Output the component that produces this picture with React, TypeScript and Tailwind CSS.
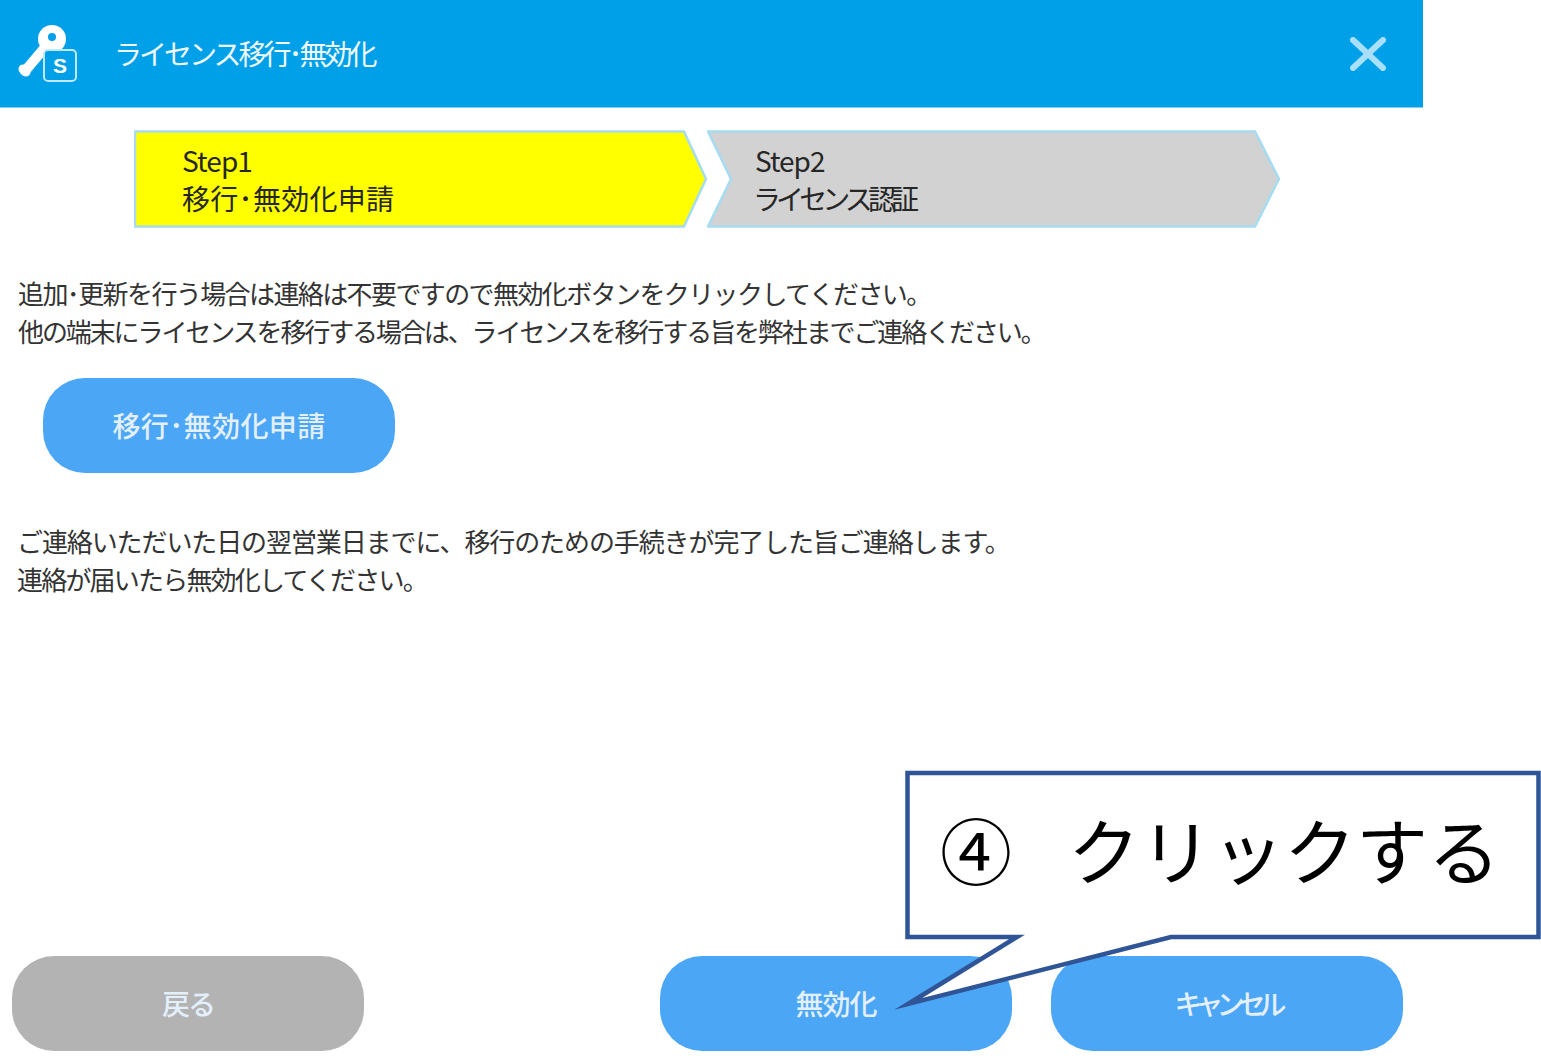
const jpFont = "font-['Noto_Sans_CJK_JP','Noto_Sans',sans-serif]";

function KeyIcon() {
  return (
    <svg width="64" height="64" viewBox="0 0 64 64" className="shrink-0 mt-[7px]">
      <path d="M30 20 L8 46" stroke="#fff" strokeWidth="10" strokeLinecap="round" fill="none" />
      <path d="M9 47 L6 44" stroke="#fff" strokeWidth="9" strokeLinecap="round" fill="none" />
      <circle cx="35" cy="14" r="14" fill="#fff" />
      <circle cx="35" cy="12" r="4" fill="#00a0e9" />
      <rect x="27" y="25" width="32" height="31" rx="4" fill="#00a0e9" stroke="#bfe8fb" strokeWidth="2" />
      <text x="43" y="48" textAnchor="middle" fontSize="21" fontWeight="700" fill="#fff" fontFamily="Liberation Sans, sans-serif">S</text>
    </svg>
  );
}

function CloseIcon() {
  return (
    <svg width="36" height="34" viewBox="0 0 36 34">
      <path d="M3 3 L33 31 M33 3 L3 31" stroke="#a8e0fb" strokeWidth="6" strokeLinecap="round" />
    </svg>
  );
}

interface StepProps {
  title: string;
  label: string;
  active?: boolean;
}

function Step({ title, label, active }: StepProps) {
  return (
    <div className="relative w-[573px] h-[98px]">
      <svg width="575" height="98" viewBox="0 0 575 98" className="absolute inset-0">
        {active ? (
          <polygon points="1,1.5 550,1.5 572,49 550,96.5 1,96.5" fill="#ffff00" stroke="#a6dcf2" strokeWidth="2.5" />
        ) : (
          <polygon points="1,1.5 548,1.5 572,49 548,96.5 1,96.5 24,49" fill="#d2d2d2" stroke="#a6dcf2" strokeWidth="2.5" />
        )}
      </svg>
      <div className="relative pl-[48px] pt-[11px] text-[28px] leading-[38px] text-[#262626]">
        <div className={active ? 'tracking-[-0.9px]' : 'tracking-[-1px]'}>{title}</div>
        <div className={active ? 'tracking-[0.3px]' : 'tracking-[-4.9px] -ml-[2px]'}>{label}</div>
      </div>
    </div>
  );
}

function ActionButton({ label, gray, trackingClass }: { label: string; gray?: boolean; trackingClass: string }) {
  return (
    <button
      className={`w-[352px] h-[95px] pb-[2px] rounded-[42px] text-[28px] font-medium text-[#e3f0fc] flex items-center justify-center ${trackingClass} ${
        gray ? 'bg-[#b3b3b3]' : 'bg-[#4ba6f5]'
      }`}
    >
      {label}
    </button>
  );
}

function Callout() {
  return (
    <div className="absolute left-[880px] top-[770px] w-[661px] h-[245px]">
      <svg width="661" height="245" viewBox="0 0 661 245" className="absolute inset-0">
        <polygon
          points="27.5,3 658.5,3 658.5,167 291,167 28,234 137,167 27.5,167"
          fill="#fff"
          stroke="#2f5597"
          strokeWidth="4.5"
          strokeMiterlimit="20"
        />
      </svg>
      <div className="relative flex items-center pl-[60px] pt-[33px] text-[72px] leading-[90px] text-black">
        <span>④</span>
        <span className="ml-[56px]">クリックする</span>
      </div>
    </div>
  );
}

export default function App() {
  return (
    <div className={`relative w-[1541px] h-[1063px] bg-white overflow-hidden ${jpFont}`}>
      <div className="w-[1423px] h-full flex flex-col">
        <header className="h-[108px] shrink-0 bg-[#00a0e9] border-b border-[#7fd0f4] flex items-center pl-[17px] pr-[37px]">
          <KeyIcon />
          <h1 className="ml-[33px] mb-[2px] text-[28px] tracking-[-3px] text-[#f0f9fe] font-normal">ライセンス移行･無効化</h1>
          <div className="ml-auto">
            <CloseIcon />
          </div>
        </header>

        <div className="flex pl-[134px] pt-[22px]">
          <Step title="Step1" label="移行･無効化申請" active />
          <Step title="Step2" label="ライセンス認証" />
        </div>

        <div className="pl-[18px] pt-[46px] text-[26px] leading-[38px] text-[#333333] whitespace-nowrap">
          <p className="tracking-[-1.6px]">追加･更新を行う場合は連絡は不要ですので無効化ボタンをクリックしてください。</p>
          <p className="tracking-[-2.1px]">他の端末にライセンスを移行する場合は、ライセンスを移行する旨を弊社までご連絡ください。</p>
        </div>

        <div className="pl-[43px] pt-[28px]">
          <ActionButton label="移行･無効化申請" trackingClass="tracking-[0.4px]" />
        </div>

        <div className="pl-[17px] pt-[49px] text-[26px] leading-[38px] text-[#333333] whitespace-nowrap">
          <p className="tracking-[-1.1px]">ご連絡いただいた日の翌営業日までに、移行のための手続きが完了した旨ご連絡します。</p>
          <p className="tracking-[-1.8px]">連絡が届いたら無効化してください。</p>
        </div>

        <footer className="mt-auto pb-[12px] pl-[12px] pr-[20px] flex items-center">
          <ActionButton label="戻る" gray trackingClass="tracking-[-2px]" />
          <div className="ml-auto flex gap-[39px]">
            <ActionButton label="無効化" trackingClass="tracking-[-1px]" />
            <ActionButton label="キャンセル" trackingClass="tracking-[-7px]" />
          </div>
        </footer>
      </div>
      <Callout />
    </div>
  );
}
